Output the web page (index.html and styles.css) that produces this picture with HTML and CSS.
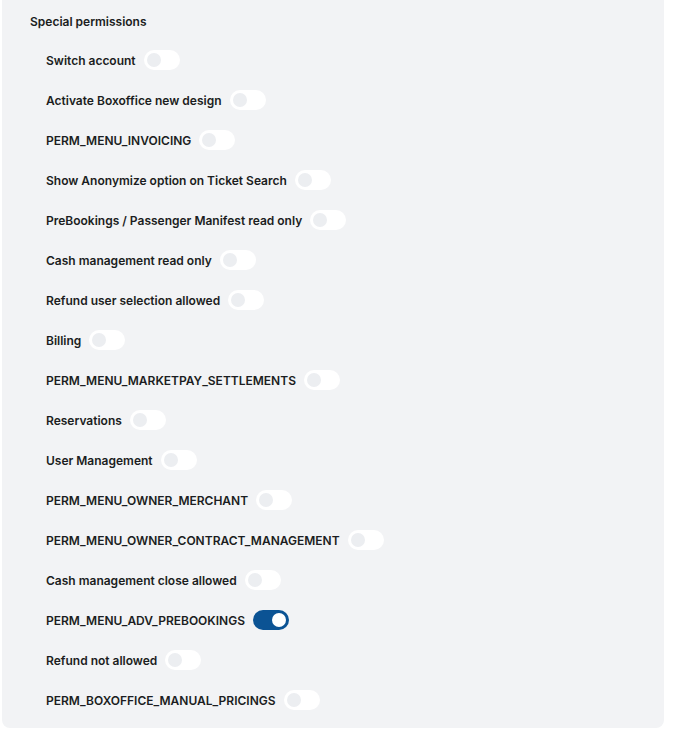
FILE: index.html
```html
<!DOCTYPE html>
<html lang="en">
<head>
    <meta charset="UTF-8">
    <title>Special permissions</title>
    <link rel="stylesheet" href="styles.css">
</head>
<body>
    <div class="panel">
        <h3 class="panel-title">Special permissions</h3>
        <ul class="perm-list">
            <li class="perm"><span class="perm-label">Switch account</span><span class="toggle"></span></li>
            <li class="perm"><span class="perm-label">Activate Boxoffice new design</span><span class="toggle"></span></li>
            <li class="perm"><span class="perm-label">PERM_MENU_INVOICING</span><span class="toggle"></span></li>
            <li class="perm"><span class="perm-label">Show Anonymize option on Ticket Search</span><span class="toggle"></span></li>
            <li class="perm"><span class="perm-label">PreBookings / Passenger Manifest read only</span><span class="toggle"></span></li>
            <li class="perm"><span class="perm-label">Cash management read only</span><span class="toggle"></span></li>
            <li class="perm"><span class="perm-label">Refund user selection allowed</span><span class="toggle"></span></li>
            <li class="perm"><span class="perm-label">Billing</span><span class="toggle"></span></li>
            <li class="perm"><span class="perm-label">PERM_MENU_MARKETPAY_SETTLEMENTS</span><span class="toggle"></span></li>
            <li class="perm"><span class="perm-label">Reservations</span><span class="toggle"></span></li>
            <li class="perm"><span class="perm-label">User Management</span><span class="toggle"></span></li>
            <li class="perm"><span class="perm-label">PERM_MENU_OWNER_MERCHANT</span><span class="toggle"></span></li>
            <li class="perm"><span class="perm-label">PERM_MENU_OWNER_CONTRACT_MANAGEMENT</span><span class="toggle"></span></li>
            <li class="perm"><span class="perm-label">Cash management close allowed</span><span class="toggle"></span></li>
            <li class="perm"><span class="perm-label">PERM_MENU_ADV_PREBOOKINGS</span><span class="toggle on"></span></li>
            <li class="perm"><span class="perm-label">Refund not allowed</span><span class="toggle"></span></li>
            <li class="perm"><span class="perm-label">PERM_BOXOFFICE_MANUAL_PRICINGS</span><span class="toggle"></span></li>
        </ul>
    </div>
</body>
</html>
```
FILE: styles.css
```css
body, div, h3, ul, li {
    margin: 0;
    padding: 0;
    box-sizing: border-box;
}

body {
    background-color: #ffffff;
    font-family: Inter, 'Noto Sans', sans-serif;
    color: #1b1d21;
}

.panel {
    width: 662px;
    margin-left: 2px;
    padding: 14px 28px 18px;
    background-color: #f2f3f5;
    border-radius: 0 0 8px 8px;
}

.panel-title {
    font-size: 12px;
    font-weight: 600;
    line-height: 16px;
}

/* lista de permisos */
.perm-list {
    list-style: none;
    margin-top: 20px;
    padding-left: 16px;
    display: flex;
    flex-direction: column;
    gap: 20px;
}

.perm {
    display: flex;
    align-items: center;
    gap: 8px;
    height: 20px;
}

.perm-label {
    font-size: 12px;
    font-weight: 600;
}

.toggle {
    position: relative;
    width: 36px;
    height: 20px;
    border-radius: 10px;
    background-color: #ffffff;
}

.toggle::after {
    content: "";
    position: absolute;
    top: 3px;
    left: 3px;
    width: 14px;
    height: 14px;
    border-radius: 50%;
    background-color: #eceef1;
}

.toggle.on {
    background-color: #0b5394;
}

.toggle.on::after {
    left: 19px;
    background-color: #ffffff;
}
```
